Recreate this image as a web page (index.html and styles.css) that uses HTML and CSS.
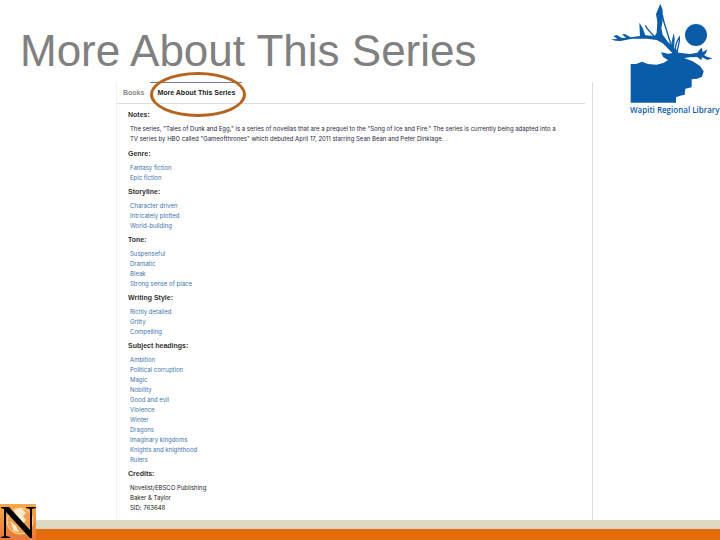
FILE: index.html
```html
<!DOCTYPE html>
<html lang="en">
<head>
  <meta charset="UTF-8" />
  <meta name="viewport" content="width=device-width, initial-scale=1.0" />
  <title>More About This Series</title>
  <link rel="stylesheet" href="styles.css">
</head>
<body>

  <header class="slide-header">
    <h1>More About This Series</h1>
    <div class="library-logo">
      <svg class="elk" viewBox="24 0 336 312" aria-hidden="true">
        <circle cx="288" cy="105" r="33" />
        <!-- body and head -->
        <path d="M92 192L108 192L126 185L144 192L170 194L192 188L204 180L190 172L183 157L204 161L216 160L228 148L240 164L250 173L278 184L300 198L311 214L306 230L292 236L275 238L275 262L256 266L254 284L240 287L228 292L228 308L92 308Z" />
        <!-- left antler -->
        <path d="M33 118L52 117L40 108L50 105L66 114L78 113L66 103L74 102L92 112L120 108L118 68L128 84L136 106L164 108L170 98L172 66L168 42L174 28L181 11L188 30L188 64L184 84L188 104L204 126L220 142L234 156L222 164L206 148L188 130L170 120L140 116L96 116L62 123L46 122Z" />
        <!-- right antler -->
        <path d="M236 158L270 162L292 158L300 148L306 143L308 157L322 148L318 160L312 165L322 171L338 175L322 180L306 172L304 181L292 171L268 172L240 176Z" />
        <g class="tines">
          <path d="M164 110C154 100 142 90 136 76" />
          <path d="M187 44C190 66 200 90 206 112L216 142" />
          <path d="M217 142C215 128 217 120 221 108C224 120 221 128 220 146" />
          <path d="M226 150C226 134 230 124 238 112C240 128 234 136 232 154" />
        </g>
      </svg>
      <p>Wapiti Regional Library</p>
    </div>
  </header>

  <main class="panel">
    <nav class="tabs">
      <a href="#" class="tab">Books</a>
      <a href="#" class="tab active">More About This Series</a>
    </nav>

    <div class="details">
      <h2>Notes:</h2>
      <p class="notes">The series, "Tales of Dunk and Egg," is a series of novellas that are a prequel to the "Song of Ice and Fire." The series is currently being adapted into a<br>TV series by HBO called "Gameofthrones" which debuted April 17, 2011 starring Sean Bean and Peter Dinklage. .</p>

      <h2>Genre:</h2>
      <ul>
        <li><a href="#">Fantasy fiction</a></li>
        <li><a href="#">Epic fiction</a></li>
      </ul>

      <h2>Storyline:</h2>
      <ul>
        <li><a href="#">Character driven</a></li>
        <li><a href="#">Intricately plotted</a></li>
        <li><a href="#">World-building</a></li>
      </ul>

      <h2>Tone:</h2>
      <ul>
        <li><a href="#">Suspenseful</a></li>
        <li><a href="#">Dramatic</a></li>
        <li><a href="#">Bleak</a></li>
        <li><a href="#">Strong sense of place</a></li>
      </ul>

      <h2>Writing Style:</h2>
      <ul>
        <li><a href="#">Richly detailed</a></li>
        <li><a href="#">Gritty</a></li>
        <li><a href="#">Compelling</a></li>
      </ul>

      <h2>Subject headings:</h2>
      <ul>
        <li><a href="#">Ambition</a></li>
        <li><a href="#">Political corruption</a></li>
        <li><a href="#">Magic</a></li>
        <li><a href="#">Nobility</a></li>
        <li><a href="#">Good and evil</a></li>
        <li><a href="#">Violence</a></li>
        <li><a href="#">Winter</a></li>
        <li><a href="#">Dragons</a></li>
        <li><a href="#">Imaginary kingdoms</a></li>
        <li><a href="#">Knights and knighthood</a></li>
        <li><a href="#">Rulers</a></li>
      </ul>

      <h2>Credits:</h2>
      <ul>
        <li>Novelist/EBSCO Publishing</li>
        <li>Baker &amp; Taylor</li>
        <li>SID: 763648</li>
      </ul>
    </div>
  </main>

  <footer class="slide-footer">
    <svg class="novelist" viewBox="0 0 36 36" aria-hidden="true">
      <defs>
        <linearGradient id="glow" x1="0" y1="0" x2="0" y2="1">
          <stop offset="0" stop-color="#f5a948" />
          <stop offset="1" stop-color="#e8783c" />
        </linearGradient>
      </defs>
      <rect width="36" height="36" fill="url(#glow)" />
      <circle cx="20" cy="17" r="13" fill="#f0a050" stroke="#fbdcae" />
      <path fill="#fdebc8" d="M14 6l7-2 5 5-3 3 3 4-4 5-4-4-5-3 2-4zM10 17l6 5 3 6-5-1z" />
      <path fill="#000" d="M1 3h8l21 23V5l-4-1V3h10v1l-4 1v29h-2L6 8v24l4 1v1H1v-1l3-1V5L1 4z" />
    </svg>
  </footer>

</body>
</html>
```
FILE: styles.css
```css
* {
  box-sizing: border-box;
  margin: 0;
  padding: 0;
}

body {
  background: #fff;
  font-family: "Liberation Sans", Arial, sans-serif;
  min-height: 100vh;
  display: flex;
  flex-direction: column;
}

a {
  color: inherit;
  text-decoration: none;
}

.slide-header {
  display: flex;
  justify-content: space-between;
  height: 82px;
  padding-left: 20px;
}

.slide-header h1 {
  color: #808080;
  font-size: 44px;
  font-weight: normal;
  line-height: 50px;
  margin-top: 26px;
}

.library-logo {
  width: 112px;
  white-space: nowrap;
}

.library-logo p {
  color: #0a5ca8;
  font-family: "Open Sans", sans-serif;
  font-size: 8px;
  font-weight: 600;
  line-height: 12px;
  margin-left: 22px;
}

.elk {
  display: block;
  width: 112px;
  height: 104px;
  fill: #0a5ca8;
}

.tines {
  fill: none;
  stroke: #0a5ca8;
  stroke-width: 4;
}

.panel {
  flex: 1;
  margin: 0 127px 0 116px;
  border-left: 1px solid #f2f2f2;
  border-right: 1px solid #ddd;
  font-size: 7px;
  line-height: 10px;
}

.tabs {
  display: flex;
  height: 22px;
  margin-right: 7px;
  border-bottom: 1px solid #ddd;
  font-weight: bold;
}

.tab {
  color: #888;
  padding: 6px;
}

.tab.active {
  position: relative;
  color: #222;
  border-top: 1px solid #7878a0;
  padding: 5px 7px;
}

/* ring round the current tab */
.tab.active::after {
  content: "";
  position: absolute;
  inset: -11px -4px -14px 0;
  border: 3px solid #b5651d;
  border-radius: 50%;
}

.details {
  padding: 6px 11px 0;
}

.details h2 {
  color: #333;
  font-size: 7px;
  margin-bottom: 4px;
}

.details ul,
.notes {
  list-style: none;
  color: #222;
  font-family: Inter, Arial, sans-serif;
  font-size: 6px;
  margin: 0 0 4px 2px;
}

.details ul:last-child {
  margin-bottom: 0;
}

.details .notes {
  color: #2a2540;
  margin-bottom: 5px;
}

.details li a {
  color: #3a74ae;
}

.slide-footer {
  flex: none;
  height: 20px;
  background: #e46c0a;
  border-top: 9px solid #ddd9c3;
  display: flex;
  align-items: flex-end;
}

.novelist {
  width: 36px;
  height: 36px;
  flex: none;
}
```
